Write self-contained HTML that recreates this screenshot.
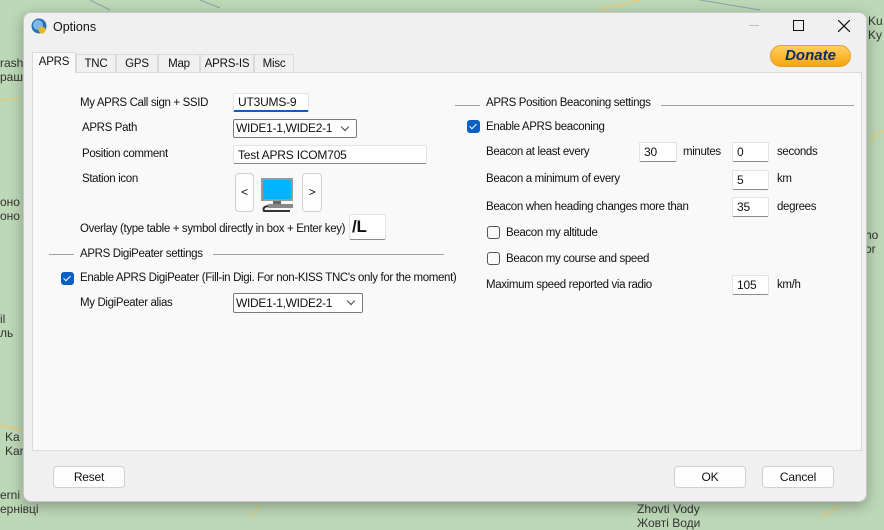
<!DOCTYPE html>
<html><head><meta charset="utf-8"><style>
*{box-sizing:border-box;margin:0;padding:0}
body{width:884px;height:518px;overflow:hidden;position:relative;background:#bcd8b6;font-family:"Liberation Sans",sans-serif;font-size:11.5px;letter-spacing:-0.35px;color:#111}
.a{position:absolute;white-space:nowrap;line-height:16px}
.win{position:absolute;left:23px;top:12px;width:844px;height:490px;background:#f0f0f0;border:1px solid #c8c8c8;border-radius:8px;box-shadow:0 4px 14px rgba(0,0,0,.3)}
.panel{position:absolute;left:32px;top:72px;width:830px;height:379px;background:#f9f9f9;border:1px solid #dadada}
.tab{position:absolute;top:54px;height:18px;border:1px solid #dadada;border-bottom:none;background:#f0f0f0;text-align:center;line-height:18px;letter-spacing:-0.2px}
.inp{position:absolute;background:#fff;border:1px solid #e3e3e3;border-bottom:1px solid #8a8a8a;border-radius:2px;padding-left:4px;line-height:18px;font-size:12px;letter-spacing:-0.2px}
.sel{position:absolute;background:#fff;border:1px solid #7a7a7a;border-radius:2px;padding-left:2px;line-height:18px;font-size:12px;letter-spacing:-0.3px}
.sel:after{content:"";position:absolute;right:8px;top:4px;width:5px;height:5px;border-right:1px solid #444;border-bottom:1px solid #444;transform:rotate(45deg)}
.btn{position:absolute;background:#fdfdfd;border:1px solid #d0d0d0;border-radius:4px;text-align:center;font-size:12px;letter-spacing:-0.2px}
.chk{position:absolute;width:13px;height:13px;border-radius:3px}
.on{background:#0a5fc4}
.on:after{content:"";position:absolute;left:4px;top:2px;width:3px;height:6px;border-right:1.2px solid #fff;border-bottom:1.2px solid #fff;transform:rotate(45deg)}
.off{border:1px solid #555;background:#fafafa}
.hl{position:absolute;height:1px;background:#a0a0a0}
.m{position:absolute;font-size:12px;color:#333;line-height:14px;letter-spacing:0}
</style></head><body>
<svg class="a" style="left:0;top:0" width="884" height="518"><g fill="none" stroke="#e8c87a" stroke-width="1.5"><path d="M0 100 L20 98 M870 140 L884 130 M0 425 L22 430 M250 518 L260 505 M820 518 L840 505 M600 10 L640 0"/></g><g fill="none" stroke="#8fa0a8"><path d="M90 0 L110 10 M200 0 L220 8 M700 0 L760 10"/></g></svg>
<div class="m" style="left:0;top:56px">rash<br>раш</div>
<div class="m" style="left:0;top:195px">оно<br>оно</div>
<div class="m" style="left:0;top:312px">il<br>ль</div>
<div class="m" style="left:5px;top:430px">Ka<br>Kar</div>
<div class="m" style="left:0;top:488px">erni<br>ернівці</div>
<div class="m" style="left:868px;top:14px">Ku<br>Ky</div>
<div class="m" style="left:865px;top:228px">ho<br>or</div>
<div class="m" style="left:637px;top:502px">Zhovti Vody<br>Жовті Води</div>
<div class="win"></div>
<svg class="a" style="left:31px;top:18px" width="17" height="17"><circle cx="8" cy="8" r="7.5" fill="#2a6fb5"/><circle cx="7" cy="7" r="5" fill="#7fb7e6"/><circle cx="11" cy="12" r="3.5" fill="#e8b820"/></svg>
<div class="a" style="left:53px;top:19px;font-size:12.5px;letter-spacing:0">Options</div>
<div class="a" style="left:749px;top:25px;width:10px;height:1px;background:#bbb"></div>
<div class="a" style="left:793px;top:20px;width:11px;height:11px;border:1.3px solid #111"></div>
<svg class="a" style="left:838px;top:20px" width="12" height="12"><path d="M0 0L12 12M12 0L0 12" stroke="#111" stroke-width="1.2"/></svg>
<div class="a" style="left:770px;top:45px;width:81px;height:22px;border-radius:11px;background:linear-gradient(#ffd060,#f6a410);border:1px solid #e2a030;text-align:center;font:italic bold 15px 'Liberation Sans',sans-serif;color:#0e2a6a;line-height:20px;letter-spacing:0">Donate</div>
<div class="panel"></div>
<div class="tab" style="left:76px;width:40px">TNC</div>
<div class="tab" style="left:116px;width:42px">GPS</div>
<div class="tab" style="left:158px;width:42px">Map</div>
<div class="tab" style="left:200px;width:54px">APRS-IS</div>
<div class="tab" style="left:254px;width:40px">Misc</div>
<div class="tab" style="left:32px;top:52px;height:21px;width:44px;background:#f9f9f9;line-height:19px">APRS</div>

<div class="a" style="left:80px;top:95px">My APRS Call sign + SSID</div>
<div class="inp" style="left:233px;top:93px;width:76px;height:19px;border-bottom:2px solid #0a5fc4;line-height:17px">UT3UMS-9</div>
<div class="a" style="left:82px;top:120px">APRS Path</div>
<div class="sel" style="left:233px;top:119px;width:124px;height:19px;line-height:17px">WIDE1-1,WIDE2-1</div>
<div class="a" style="left:82px;top:146px">Position comment</div>
<div class="inp" style="left:233px;top:145px;width:194px;height:19px">Test APRS ICOM705</div>
<div class="a" style="left:82px;top:171px">Station icon</div>
<div class="btn" style="left:235px;top:173px;width:19px;height:39px;line-height:37px">&lt;</div>
<svg class="a" style="left:260px;top:177px" width="34" height="36"><rect x="1" y="1" width="32" height="23" fill="#9a9a9a"/><rect x="3" y="3" width="28" height="19" fill="#00b4ff"/><rect x="13" y="24" width="8" height="3" fill="#666"/><rect x="8" y="27" width="25" height="4" fill="#888"/><path d="M8 29 Q2 30 4 34 L30 34" stroke="#333" stroke-width="2" fill="none"/></svg>
<div class="btn" style="left:302px;top:173px;width:20px;height:39px;line-height:37px">&gt;</div>
<div class="a" style="left:80px;top:221px">Overlay (type table + symbol directly in box + Enter key)</div>
<div class="inp" style="left:349px;top:214px;width:37px;height:26px;font:bold 17px 'Liberation Sans',sans-serif;line-height:24px;padding-left:2px">/L</div>
<div class="hl" style="left:49px;top:254px;width:25px"></div>
<div class="a" style="left:80px;top:246px">APRS DigiPeater settings</div>
<div class="hl" style="left:213px;top:254px;width:231px"></div>
<div class="chk on" style="left:61px;top:272px"></div>
<div class="a" style="left:80px;top:270px">Enable APRS DigiPeater (Fill-in Digi. For non-KISS TNC's only for the moment)</div>
<div class="a" style="left:80px;top:295px">My DigiPeater alias</div>
<div class="sel" style="left:233px;top:293px;width:130px;height:20px">WIDE1-1,WIDE2-1</div>

<div class="hl" style="left:455px;top:105px;width:25px"></div>
<div class="a" style="left:486px;top:95px">APRS Position Beaconing settings</div>
<div class="hl" style="left:661px;top:105px;width:193px"></div>
<div class="chk on" style="left:467px;top:120px"></div>
<div class="a" style="left:486px;top:119px">Enable APRS beaconing</div>
<div class="a" style="left:486px;top:144px">Beacon at least every</div>
<div class="inp" style="left:639px;top:142px;width:38px;height:20px">30</div>
<div class="a" style="left:683px;top:144px">minutes</div>
<div class="inp" style="left:732px;top:142px;width:37px;height:20px">0</div>
<div class="a" style="left:777px;top:144px">seconds</div>
<div class="a" style="left:486px;top:171px">Beacon a minimum of every</div>
<div class="inp" style="left:732px;top:170px;width:37px;height:20px">5</div>
<div class="a" style="left:777px;top:171px">km</div>
<div class="a" style="left:486px;top:199px">Beacon when heading changes more than</div>
<div class="inp" style="left:732px;top:197px;width:37px;height:20px">35</div>
<div class="a" style="left:777px;top:199px">degrees</div>
<div class="chk off" style="left:487px;top:226px"></div>
<div class="a" style="left:506px;top:225px">Beacon my altitude</div>
<div class="chk off" style="left:487px;top:252px"></div>
<div class="a" style="left:506px;top:251px">Beacon my course and speed</div>
<div class="a" style="left:486px;top:277px">Maximum speed reported via radio</div>
<div class="inp" style="left:732px;top:275px;width:37px;height:20px">105</div>
<div class="a" style="left:777px;top:277px">km/h</div>

<div class="btn" style="left:53px;top:466px;width:72px;height:22px;line-height:20px">Reset</div>
<div class="btn" style="left:674px;top:466px;width:72px;height:22px;line-height:20px">OK</div>
<div class="btn" style="left:762px;top:466px;width:72px;height:22px;line-height:20px">Cancel</div>
</body></html>
